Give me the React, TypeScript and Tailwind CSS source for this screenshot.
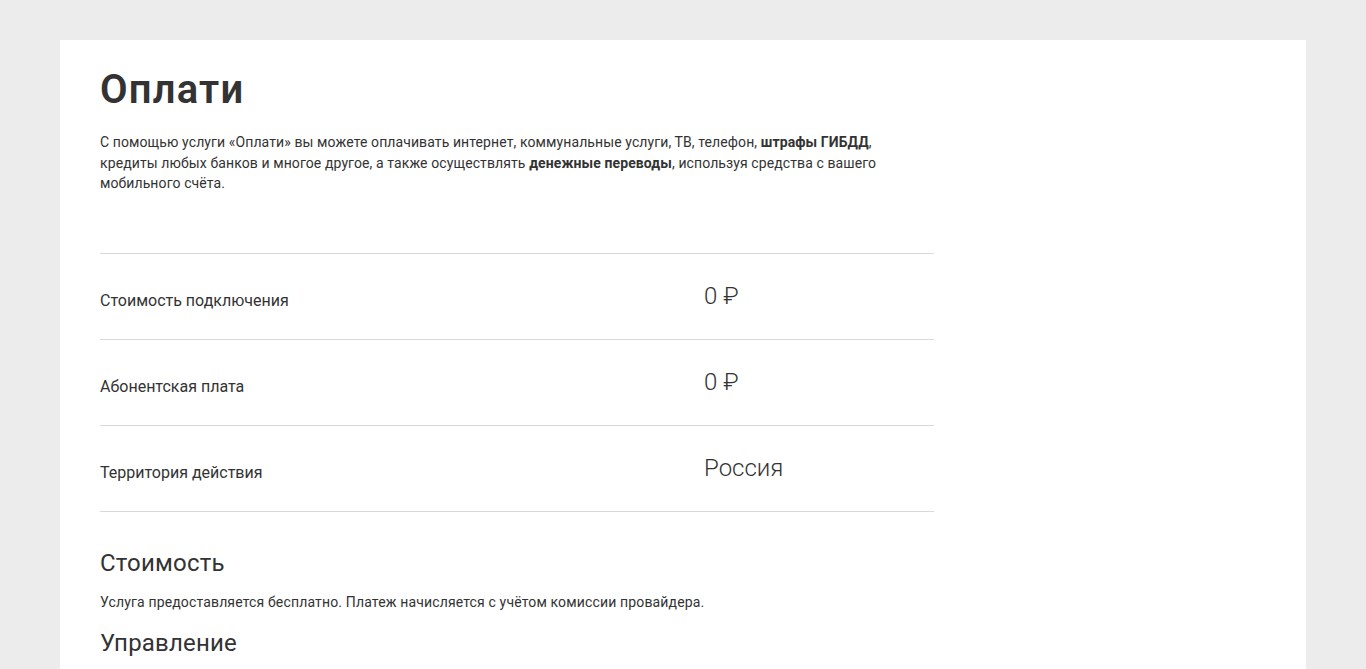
import React from "react";

const rows = [
  { label: "Стоимость подключения", value: "0 ₽" },
  { label: "Абонентская плата", value: "0 ₽" },
  { label: "Территория действия", value: "Россия" },
];

export default function App() {
  return (
    <div
      className="min-h-screen bg-[#ececec] pt-10 px-[60px] text-[#333333]"
      style={{ fontFamily: "Roboto, 'Noto Sans', sans-serif" }}
    >
      <div className="bg-white px-10 pt-[26px] pb-10 min-h-[700px]">
        <h1 className="text-[40px] leading-[48px] font-semibold mb-[18px] tracking-[1.2px]">Оплати</h1>
        <p className="text-[14px] leading-[20.5px] max-w-[800px] tracking-[0.1px]">
          С помощью услуги «Оплати» вы можете оплачивать интернет, коммунальные услуги, ТВ, телефон,{" "}
          <b className="font-bold">штрафы ГИБДД</b>, кредиты любых банков и многое другое, а также осуществлять{" "}
          <b className="font-bold">денежные переводы</b>, используя средства с вашего мобильного счёта.
        </p>
        <div className="mt-[59px] w-[834px] border-t border-[#d9d9d9]">
          {rows.map((r) => (
            <div key={r.label} className="flex items-center h-[86px] border-b border-[#d9d9d9]">
              <div className="w-[604px] text-[16px] pt-[10px]">{r.label}</div>
              <div className="text-[24px] font-light">{r.value}</div>
            </div>
          ))}
        </div>
        <h2 className="mt-[36px] text-[24px] leading-[30px] tracking-[0.2px]">Стоимость</h2>
        <p className="mt-[14px] text-[14px] leading-[20px] tracking-[0.15px]">
          Услуга предоставляется бесплатно. Платеж начисляется с учётом комиссии провайдера.
        </p>
        <h2 className="mt-[16px] text-[24px] leading-[30px] tracking-[0.2px]">Управление</h2>
      </div>
    </div>
  );
}
